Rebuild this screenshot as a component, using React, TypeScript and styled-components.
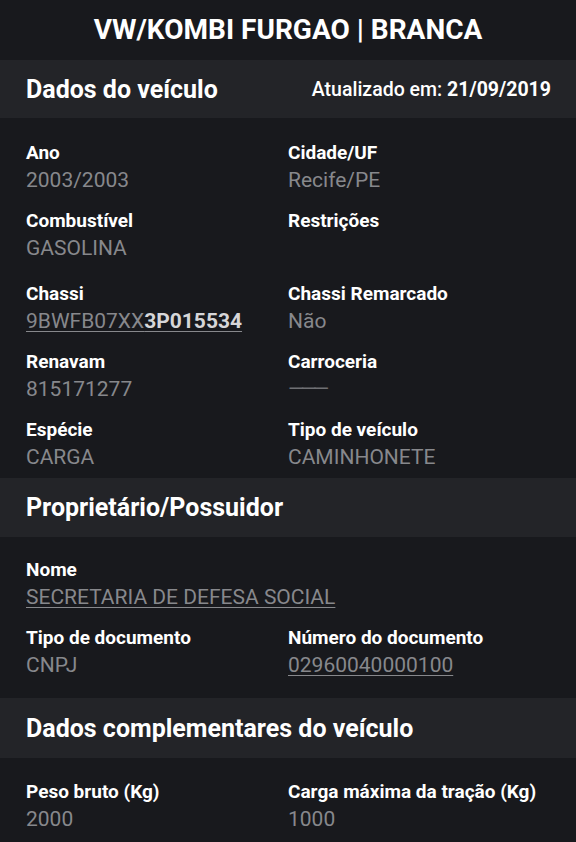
import React from "react";
import styled, { createGlobalStyle } from "styled-components";

const Global = createGlobalStyle`
  html, body { margin: 0; padding: 0; background: #18191d; }
  body { font-family: Roboto, "Noto Sans", sans-serif; -webkit-font-smoothing: antialiased; }
  * { box-sizing: border-box; }
`;

const Page = styled.div`
  width: 576px;
  min-height: 842px;
  background: #18191d;
  color: #fff;
  display: flex;
  flex-direction: column;
`;

const TitleBar = styled.header`
  height: 60px;
  display: flex;
  align-items: center;
  justify-content: center;
  padding-bottom: 2px;
`;

const Title = styled.h1`
  margin: 0;
  font-size: 28px;
  font-weight: 700;
  color: #fff;
`;

const SectionHeader = styled.div<{ $h: number }>`
  height: ${(p) => p.$h}px;
  background: #232428;
  display: flex;
  align-items: center;
  justify-content: space-between;
  padding: 0 25px 0 26px;
`;

const SectionTitle = styled.h2`
  margin: 0;
  font-size: 25px;
  font-weight: 700;
  color: #fff;
`;

const Updated = styled.div`
  font-size: 19.5px;
  font-weight: 500;
  color: #fff;
  b { font-weight: 700; }
`;

const Grid = styled.div<{ $pt: number; $pb: number }>`
  display: grid;
  grid-template-columns: 1fr 1fr;
  row-gap: 15px;
  padding: ${(p) => p.$pt}px 26px ${(p) => p.$pb}px 26px;
`;

const Field = styled.div<{ $full?: boolean; $extra?: number }>`
  display: flex;
  flex-direction: column;
  grid-column: ${(p) => (p.$full ? "1 / span 2" : "auto")};
  margin-bottom: ${(p) => p.$extra ?? 0}px;
`;

const Label = styled.div`
  font-size: 19px;
  line-height: 24px;
  font-weight: 700;
  color: #fff;
`;

const Value = styled.div<{ $link?: boolean }>`
  margin-top: 1px;
  font-size: 21px;
  line-height: 28px;
  min-height: 28px;
  font-weight: 400;
  color: #87888c;
  white-space: nowrap;
  span {
    text-decoration: ${(p) => (p.$link ? "underline" : "none")};
    text-decoration-thickness: 1px;
    text-underline-offset: 3px;
  }
  b { font-weight: 700; color: #d6d6d8; }
`;

const Dash = styled.span`
  display: inline-block;
  letter-spacing: -4px;
  color: #6f7074;
`;

type F = { label: string; value?: React.ReactNode; link?: boolean; full?: boolean; extra?: number };

const FieldItem = ({ label, value, link, full, extra }: F) => (
  <Field $full={full} $extra={extra}>
    <Label>{label}</Label>
    <Value $link={link}>{value !== undefined ? <span>{value}</span> : null}</Value>
  </Field>
);

export default function App() {
  return (
    <Page>
      <Global />
      <TitleBar>
        <Title>VW/KOMBI FURGAO | BRANCA</Title>
      </TitleBar>

      <SectionHeader $h={58}>
        <SectionTitle>Dados do veículo</SectionTitle>
        <Updated>
          Atualizado em: <b>21/09/2019</b>
        </Updated>
      </SectionHeader>
      <Grid $pt={23} $pb={7}>
        <FieldItem label="Ano" value="2003/2003" />
        <FieldItem label="Cidade/UF" value="Recife/PE" />
        <FieldItem label="Combustível" value="GASOLINA" extra={5} />
        <FieldItem label="Restrições" extra={5} />
        <FieldItem
          label="Chassi"
          link
          value={
            <>
              9BWFB07XX<b>3P015534</b>
            </>
          }
        />
        <FieldItem label="Chassi Remarcado" value="Não" />
        <FieldItem label="Renavam" value="815171277" />
        <FieldItem label="Carroceria" value={<Dash>———</Dash>} />
        <FieldItem label="Espécie" value="CARGA" />
        <FieldItem label="Tipo de veículo" value="CAMINHONETE" />
      </Grid>

      <SectionHeader $h={59}>
        <SectionTitle>Proprietário/Possuidor</SectionTitle>
      </SectionHeader>
      <Grid $pt={21} $pb={19}>
        <FieldItem label="Nome" value="SECRETARIA DE DEFESA SOCIAL" link full />
        <FieldItem label="Tipo de documento" value="CNPJ" />
        <FieldItem label="Número do documento" value="02960040000100" link />
      </Grid>

      <SectionHeader $h={60}>
        <SectionTitle>Dados complementares do veículo</SectionTitle>
      </SectionHeader>
      <Grid $pt={22} $pb={10}>
        <FieldItem label="Peso bruto (Kg)" value="2000" />
        <FieldItem label="Carga máxima da tração (Kg)" value="1000" />
      </Grid>
    </Page>
  );
}
